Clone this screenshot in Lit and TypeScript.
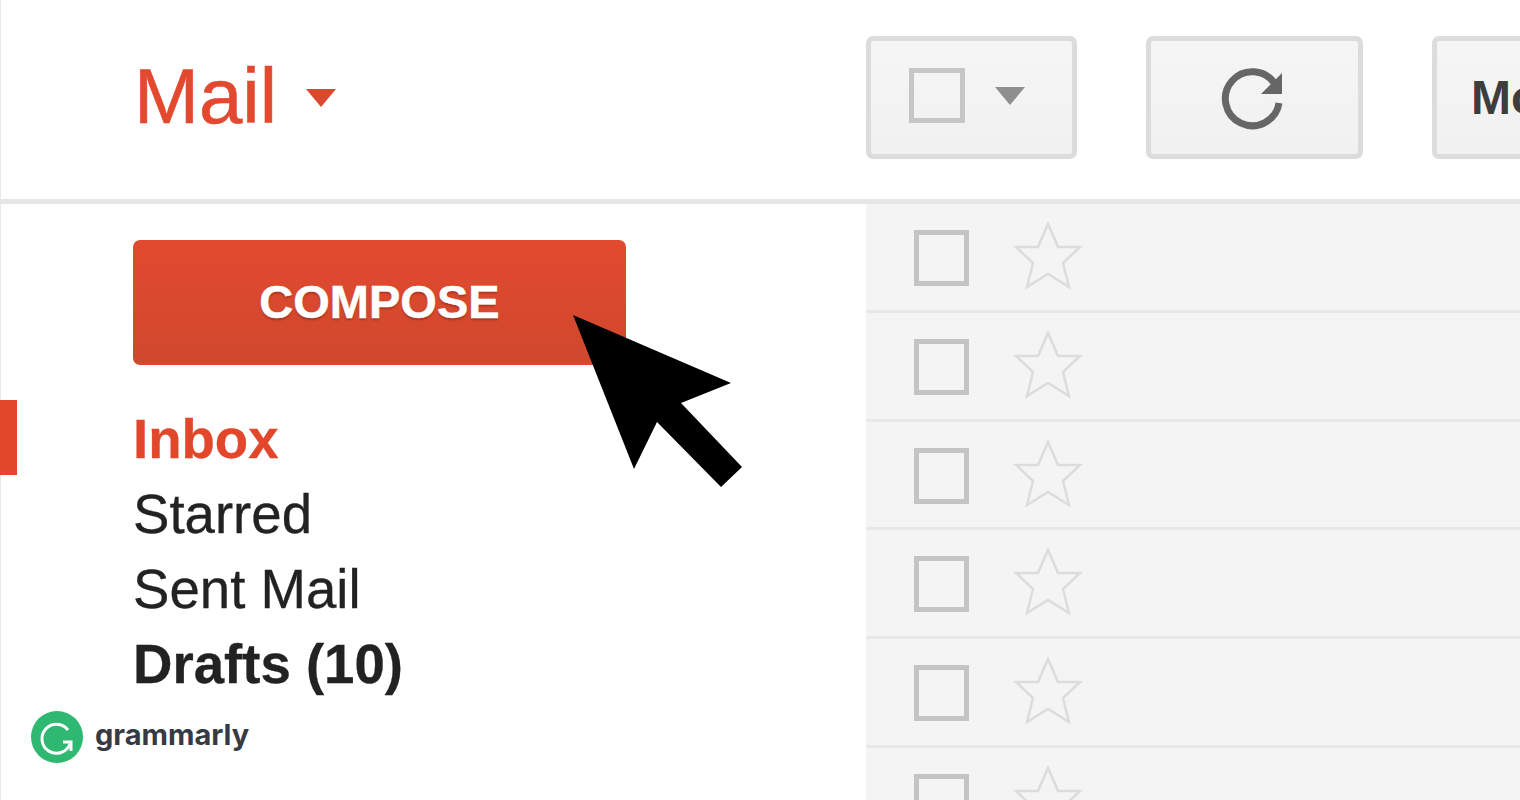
import { LitElement, html, css, svg } from "lit";
import { customElement } from "lit/decorators.js";

const FOLDERS = [
  { label: "Inbox", kind: "active" },
  { label: "Starred", kind: "" },
  { label: "Sent Mail", kind: "" },
  { label: "Drafts (10)", kind: "bold" },
];

const star = svg`<polygon points="35,3 45,26 67,26 50,42 56,66 35,53 14,66 20,42 3,26 25,26" />`;

@customElement("app-root")
export class AppRoot extends LitElement {
  static styles = css`
    :host {
      display: block;
      position: relative;
      width: 1520px;
      height: 800px;
      overflow: hidden;
      background: #fff;
      font-family: "Liberation Sans", Arial, sans-serif;
      color: #222;
    }
    .edge {
      position: absolute;
      left: 0;
      top: 0;
      bottom: 0;
      width: 1px;
      background: #e8e8e8;
    }
    header {
      display: flex;
      align-items: flex-start;
      height: 199px;
      border-bottom: 5px solid #e6e6e6;
      box-sizing: content-box;
    }
    .brand {
      width: 866px;
      flex: none;
      display: flex;
      align-items: center;
      box-sizing: border-box;
      padding: 51px 0 0 134px;
      height: 141px;
      color: #e2492f;
      font-size: 78px;
      line-height: 90px;
      -webkit-text-stroke: 0.6px #e2492f;
    }
    .brand span {
      display: block;
    }
    .caret {
      width: 0;
      height: 0;
      margin: 3px 0 0 29px;
      border-left: 15.5px solid transparent;
      border-right: 15.5px solid transparent;
      border-top: 18px solid #d9492f;
    }
    .tools {
      display: flex;
      padding-top: 36px;
      flex: none;
    }
    .tool {
      box-sizing: border-box;
      height: 123px;
      border: 5px solid #dcdcdc;
      border-radius: 7px;
      background: linear-gradient(#f6f5f6, #f1f1f1);
      display: flex;
      align-items: center;
      flex: none;
    }
    .tool.select {
      width: 211px;
      margin-right: 69px;
      padding-left: 38px;
    }
    .tool.refresh {
      width: 217px;
      margin-right: 69px;
      justify-content: center;
    }
    .tool.more {
      width: 300px;
      padding-left: 34px;
      font-size: 48px;
      font-weight: 700;
      color: #3d3d3d;
    }
    .check {
      box-sizing: border-box;
      width: 56px;
      height: 55px;
      border: 5px solid #c6c6c6;
      flex: none;
    }
    .tool .check {
      margin-top: -4px;
    }
    .tool-caret {
      width: 0;
      height: 0;
      margin: -4px 0 0 30px;
      border-left: 15px solid transparent;
      border-right: 15px solid transparent;
      border-top: 18px solid #8f8f8f;
    }
    .refresh svg {
      display: block;
      margin-right: 5px;
    }
    main {
      display: flex;
      height: 596px;
    }
    nav {
      width: 866px;
      flex: none;
      box-sizing: border-box;
      padding: 36px 0 0 133px;
    }
    .compose {
      box-sizing: border-box;
      width: 493px;
      height: 125px;
      border-radius: 7px;
      border-bottom: 2px solid #e4452b;
      background: linear-gradient(#e24a2f, #d0482e);
      color: #fff;
      font-size: 47px;
      font-weight: 700;
      -webkit-text-stroke: 0.5px #fff;
      display: flex;
      align-items: center;
      justify-content: center;
      text-shadow: 0 2px 2px rgba(120, 30, 10, 0.5);
    }
    .folders {
      margin-top: 35px;
    }
    .folder {
      position: relative;
      height: 75px;
      line-height: 79px;
      font-size: 54.6px;
      -webkit-text-stroke: 0.3px currentColor;
    }
    .folder.bold {
      font-weight: 700;
    }
    .folder.active {
      font-weight: 700;
      color: #e2472c;
    }
    .folder.active::before {
      content: "";
      position: absolute;
      left: -133px;
      top: 0;
      width: 17px;
      height: 75px;
      background: #e2472c;
    }
    .list {
      flex: 1;
      background: #f5f4f5;
      min-width: 0;
    }
    .row {
      box-sizing: border-box;
      height: 108.8px;
      border-bottom: 3px solid #e8e8e8;
      display: flex;
      align-items: flex-start;
      padding: 26px 0 0 48px;
    }
    .row .check {
      width: 55px;
      height: 56px;
      border-color: #c4c4c4;
    }
    .row svg {
      display: block;
      margin: -9px 0 0 44px;
      flex: none;
      fill: none;
      stroke: #dcdcdc;
      stroke-width: 2.5;
    }
    .cursor {
      position: absolute;
      left: 560px;
      top: 300px;
    }
    .logo {
      position: absolute;
      left: 31px;
      top: 711px;
      display: flex;
      align-items: center;
      gap: 12px;
      font-family: Inter, "Open Sans", sans-serif;
      font-weight: 700;
      font-size: 29px;
      line-height: 48px;
      color: #353a45;
    }
    .logo svg {
      display: block;
    }
    .logo span {
      margin-bottom: 4px;
    }
  `;

  render() {
    return html`
      <div class="edge"></div>
      <header>
        <div class="brand"><span>Mail</span><div class="caret"></div></div>
        <div class="tools">
          <div class="tool select">
            <div class="check"></div>
            <div class="tool-caret"></div>
          </div>
          <div class="tool refresh">
            <svg width="70" height="70" viewBox="0 0 70 70">
              <path d="M62 40A27 27 0 1 1 58 21" fill="none" stroke="#666" stroke-width="7" />
              <polygon points="65,10 65,31 44,31" fill="#666" />
            </svg>
          </div>
          <div class="tool more">More</div>
        </div>
      </header>
      <main>
        <nav>
          <div class="compose">COMPOSE</div>
          <div class="folders">
            ${FOLDERS.map((f) => html`<div class="folder ${f.kind}">${f.label}</div>`)}
          </div>
        </nav>
        <section class="list">
          ${[0, 1, 2, 3, 4, 5].map(
            () => html`
              <div class="row">
                <div class="check"></div>
                <svg width="70" height="70" viewBox="0 0 70 70">${star}</svg>
              </div>
            `
          )}
        </section>
      </main>
      <svg class="cursor" width="200" height="200" viewBox="560 300 200 200">
        <polygon points="573,315 731,383 681,403 742,467 721,487 657,422 634,469" fill="#000" />
      </svg>
      <div class="logo">
        <svg width="52" height="52" viewBox="0 0 52 52">
          <circle cx="26" cy="26" r="26" fill="#2eb872" />
          <path d="M37 19A14.5 14.5 0 1 0 39 33" fill="none" stroke="#fff" stroke-width="3" />
          <path d="M32 31H40V40" fill="none" stroke="#fff" stroke-width="3" />
        </svg>
        <span>grammarly</span>
      </div>
    `;
  }
}
